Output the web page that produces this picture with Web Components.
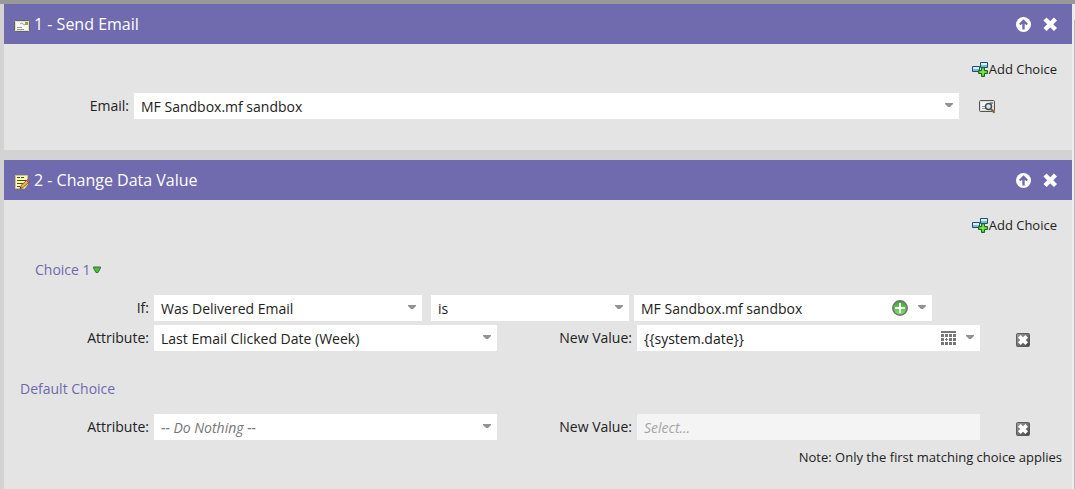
<!DOCTYPE html>
<html lang="en">
<head>
<meta charset="utf-8">
<title>Flow steps</title>
<style>
body { margin: 0; background: #d3d3d3; font: 14px/20px "Open Sans", sans-serif; color: #222; }
</style>
</head>
<body>
<flow-page>
  <flow-step heading="1 - Send Email" icon="mail">
    <form-row kind="single">
      <combo-field label="Email:" value="MF Sandbox.mf sandbox"></combo-field>
      <icon-button name="preview" label="Preview email"></icon-button>
    </form-row>
  </flow-step>
  <flow-step heading="2 - Change Data Value" icon="note" class="last">
    <choice-group heading="Choice 1" menu>
      <form-row kind="condition">
        <combo-field label="If:" value="Was Delivered Email"></combo-field>
        <combo-field class="operator" hint="Operator" value="is"></combo-field>
        <combo-field hint="Email" value="MF Sandbox.mf sandbox" extra="plus"></combo-field>
      </form-row>
      <form-row kind="pair">
        <combo-field label="Attribute:" value="Last Email Clicked Date (Week)"></combo-field>
        <combo-field label="New Value:" value="{{system.date}}" extra="calendar" type="text"></combo-field>
        <icon-button name="remove" label="Remove choice"></icon-button>
      </form-row>
    </choice-group>
    <choice-group heading="Default Choice" class="default">
      <form-row kind="pair">
        <combo-field label="Attribute:" value="-- Do Nothing --" empty></combo-field>
        <combo-field label="New Value:" value="Select..." type="disabled"></combo-field>
        <icon-button name="remove" label="Remove default choice"></icon-button>
      </form-row>
    </choice-group>
    <p slot="note">Note: Only the first matching choice applies</p>
  </flow-step>
</flow-page>

<script>
const svg = (w, h, body) => `<svg width="${w}" height="${h}" viewBox="0 0 ${w} ${h}" aria-hidden="true">${body}</svg>`;
const icons = {
  mail: svg(16, 12, `<rect x=".5" y=".5" width="15" height="11" rx="1" fill="#dcdcd4" stroke="#66665e"/><path d="M2 2h12v8H2z" fill="#f6f6f2"/><path d="M3 7.500h5M3 9.500h7" stroke="#9a9aa0"/><path d="M6 4q2-2 3 0t3-1" fill="none" stroke="#99a"/><path d="M11 2h3v3h-3z" fill="#97995a"/>`),
  note: svg(16, 16, `<path d="M1.500 1.500h12v9l-3 4h-9z" fill="#fbf7b4" stroke="#cfc57a"/><path d="M3 3.500h3m1 0h3M3 6.500h9M3 9.500h6M3 12.500h3" stroke="#4c4c2b"/><path d="m6 14.500 1-3 5.500-5 2 2-5.500 5z" fill="#efb43f" stroke="#6b4f1c" stroke-width=".8"/><path d="m12.500 6.500 2 2 1-1-2-2z" fill="#d66476" stroke="#8c3549" stroke-width=".6"/><path d="m6 14.500.6-1.600 1 1z" fill="#222"/>`),
  up: svg(16, 16, `<circle cx="8.500" cy="8.500" r="7.500" fill="#fff"/><path d="M8.500 3.200 4 7.800l1.500 1.500L7.300 7.700V13.500h2.400V7.700l1.800 1.600L13 7.800z" fill="#706aaf"/>`),
  close: svg(14, 14, `<path d="M2 2 12.500 12.500M12.500 2 2 12.500" stroke="#fff" stroke-width="4.400"/>`),
  add: svg(18, 16, `<g fill="#79b8df" stroke="#1f5074"><path d="M9.500 1.500h7v5h-7zM1.500 5.500h7v5h-7z"/></g><path d="M10 2h6v2h-6zM2 6h6v2H2z" fill="#d7effb"/><path d="M10.500 7.500h3v3h3v3h-3v3h-3v-3h-3v-3h3z" transform="translate(0 -1)" fill="#45c02b" stroke="#1c6a18"/><path d="M12 8v6M9 11h6" stroke="#9bec74"/>`),
  preview: svg(17, 15, `<rect x=".5" y="1.500" width="15" height="11" rx="1" fill="#dcdcdc" stroke="#555"/><path d="M2 3h12v8H2z" fill="#f4f4f2"/><path d="M3 7.500h3M3 9.500h4" stroke="#999"/><path d="M11 3h3v2h-3z" fill="#999a80"/><circle cx="9.500" cy="7.500" r="3" fill="#d3e7f4" stroke="#454d55" stroke-width="1.500"/><path d="m12 10 3.500 3.800" stroke="#85683a" stroke-width="2.200"/>`),
  remove: svg(14, 14, `<defs><linearGradient id="g" x2="1" y2="1"><stop stop-color="#a0a0a0"/><stop offset="1" stop-color="#444"/></linearGradient></defs><rect x=".5" y=".5" width="13" height="13" rx="1" fill="url(#g)" stroke="#5c5c5c"/><path d="m3.300 3.300 7.400 7.400m0-7.400-7.400 7.400" stroke="#fff" stroke-width="3.800"/>`),
  plus: svg(16, 16, `<defs><linearGradient id="g" x2="0" y2="1"><stop stop-color="#4d9b45"/><stop offset=".4" stop-color="#5fb94d"/><stop offset="1" stop-color="#84e36c"/></linearGradient></defs><circle cx="8" cy="8" r="7.200" fill="url(#g)" stroke="#68766a" stroke-width="1.500"/><path d="M8 3v10M3 8h10" stroke="#f2fff0" stroke-width="2"/>`),
  calendar: svg(15, 14, `<path d="M0 0h15v2H0zM0 3h3v3H0zM4 3h3v3H4zM8 3h3v3H8zM12 3h3v3h-3zM0 7h3v3H0zM5 7h1v1h1v1H6v1H5V9H4V8h1zM8 7h3v3H8zM12 7h3v3h-3zM0 11h3v3H0zM4 11h3v3H4zM8 11h3v3H8zM12 11h3v3h-3z" fill="#777"/>`),
  caret: svg(8, 4, `<path d="M0 0h8v1L5 4H3L0 1z" fill="#929292"/>`),
  greenCaret: svg(8, 8, `<path d="M.5 1h7v1L5 6.500H3L.5 2z" fill="#52b83c" stroke="#2f7a26"/>`)
};

class Base extends HTMLElement {
  constructor() { super(); this.attachShadow({ mode: "open" }); }
  connectedCallback() {
    this.shadowRoot.innerHTML = `<style>*{box-sizing:border-box}svg{display:block}button{display:flex;align-items:center;margin:0;padding:0;border:0;background:none;font:inherit;color:inherit;cursor:pointer}${this.css()}</style>${this.html()}`;
  }
  attr(name) { return this.getAttribute(name) || ""; }
}

customElements.define("flow-page", class extends Base {
  css() { return `:host{display:grid;grid-template-rows:4px 1fr;min-height:100vh}
    .top{background:#999}
    .frame{display:grid;grid-template-columns:1fr 3px}
    main{display:flex;flex-direction:column;gap:10px;padding-left:4px}
    .edge{background:#ececec;display:flex;padding-top:16px}
    .edge i{flex:1;border-right:1px solid #bababa}`; }
  html() { return `<div class="top"></div><div class="frame"><main><slot></slot></main><div class="edge"><i></i></div></div>`; }
});

customElements.define("flow-step", class extends Base {
  css() { return `:host{display:block;background:#e4e4e4}
    :host(.last){flex:1}
    header{display:flex;align-items:center;height:40px;padding:0 15px 0 10px;background:#706aaf;color:#fff}
    .icon{width:20px;padding-top:3px}
    h2{flex:1;margin:0;font-size:16px;line-height:24px;font-weight:400}
    .tools{display:flex;gap:12px}
    .bar{display:flex;justify-content:flex-end;padding:15px 15px 14px}
    .bar button{font-size:13px;line-height:20px}
    .content{padding-bottom:31px}
    :host(.last) .content{padding:11px 0 7px}
    ::slotted(p){margin:0;padding-right:10px;text-align:right;font-size:13px}`; }
  html() { return `<header><span class="icon">${icons[this.attr("icon")]}</span><h2>${this.attr("heading")}</h2>
    <div class="tools"><button aria-label="Move up">${icons.up}</button><button aria-label="Delete step">${icons.close}</button></div></header>
    <div class="bar"><button>${icons.add}Add Choice</button></div>
    <div class="content"><slot></slot></div><slot name="note"></slot>`; }
});

customElements.define("choice-group", class extends Base {
  css() { return `:host{display:block}
    :host(.default){padding-top:28px}
    h3{display:flex;align-items:center;gap:2px;margin:0 0 15px;padding-left:31px;font-size:14px;line-height:20px;font-weight:400;color:#706aaf}
    :host(.default) h3{padding-left:16px}
    .rows{display:grid;gap:4px}`; }
  html() { return `<h3>${this.attr("heading")}${this.hasAttribute("menu") ? `<button aria-label="Choice menu">${icons.greenCaret}</button>` : ""}</h3><div class="rows"><slot></slot></div>`; }
});

customElements.define("form-row", class extends Base {
  css() { return `:host{display:grid;column-gap:5px;grid-template-columns:125px 1fr 108px}
    :host([kind=condition]){grid-template-columns:145px 268fr 202fr 298fr 135px}
    :host([kind=pair]){grid-template-columns:145px 1fr 130px 1fr 87px}
    ::slotted(icon-button){padding-left:15px}
    :host([kind=pair]) ::slotted(icon-button){padding:4px 0 0 31px}`; }
  html() { return `<slot></slot>`; }
});

customElements.define("combo-field", class extends Base {
  css() { return `:host{display:contents}
    label{text-align:right;line-height:26px}
    .box{position:relative;display:flex;height:26px;min-width:0}
    :host(.operator) .box{margin-left:4px}
    select,input{appearance:none;flex:1;min-width:0;margin:0;padding:2px 20px 0 7px;border:0;border-radius:0;background:#fff;font:inherit;color:#222;opacity:1}
    :host([empty]) select{font-style:italic;color:#777}
    input:disabled{background:#f4f4f4;font-style:italic}
    input::placeholder{color:#a5a5a5;opacity:1}
    .caret{position:absolute;right:6px;top:10px;pointer-events:none}
    .extra{position:absolute;right:24px;top:0;height:26px}`; }
  html() {
    const label = this.attr("label"), value = this.attr("value"), type = this.attr("type"), extra = this.attr("extra");
    const name = label ? "" : ` aria-label="${this.attr("hint")}"`;
    const control = type === "disabled" ? `<input id="f" disabled placeholder="${value}">`
      : type === "text" ? `<input id="f" value="${value}">`
      : `<select id="f"${name}><option>${value}</option></select>`;
    return `${label ? `<label for="f">${label}</label>` : ""}<div class="box">${control}
      ${extra ? `<button class="extra" aria-label="${extra === "plus" ? "Add value" : "Pick date"}">${icons[extra]}</button>` : ""}
      ${type === "disabled" ? "" : `<span class="caret">${icons.caret}</span>`}</div>`;
  }
});

customElements.define("icon-button", class extends Base {
  css() { return `:host{display:flex;align-items:center}`; }
  html() { return `<button aria-label="${this.attr("label")}">${icons[this.attr("name")]}</button>`; }
});
</script>
</body>
</html>
